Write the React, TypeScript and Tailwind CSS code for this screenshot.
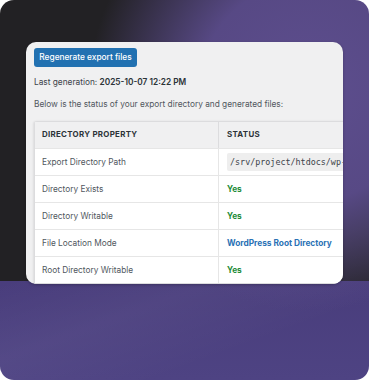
import React from 'react';

const rows: { label: string; value: React.ReactNode }[] = [
  {
    label: 'Export Directory Path',
    value: (
      <code className="rounded-[2px] bg-[#eeeeee] px-[3px] py-[3px] font-['DejaVu_Sans_Mono',monospace] text-[8.4px] text-[#3c434a] whitespace-nowrap">
        /srv/project/htdocs/wp-content/uploads/exports
      </code>
    ),
  },
  { label: 'Directory Exists', value: <span className="font-bold text-[#1e8c37]">Yes</span> },
  { label: 'Directory Writable', value: <span className="font-bold text-[#1e8c37]">Yes</span> },
  { label: 'File Location Mode', value: <span className="font-bold text-[#2a72b5]">WordPress Root Directory</span> },
  { label: 'Root Directory Writable', value: <span className="font-bold text-[#1e8c37]">Yes</span> },
];

export default function App() {
  return (
    <div
      className="h-[380px] w-[369px] overflow-hidden rounded-[14px] bg-[radial-gradient(ellipse_60%_58%_at_84%_24%,#5d4e8e_0%,rgba(90,75,138,0.95)_50%,rgba(34,33,36,0)_100%),linear-gradient(160deg,rgba(255,255,255,0)_55%,rgba(255,255,255,0.04)_70%,rgba(255,255,255,0)_85%),linear-gradient(180deg,#222124_0%,#222124_74%,#493d7c_74%,#4e4383_100%)] pl-[26px] pt-[42px] font-['Inter',sans-serif]"
    >
      <div className="flex h-[242px] w-[317px] flex-col overflow-hidden rounded-[10px] bg-[#f0f0f1] pl-[8px] pt-[6px] shadow-[0_1px_3px_rgba(0,0,0,0.25)]">
        <div className="flex">
          <button className="h-[19px] w-[103px] rounded-[3px] bg-[#2271b1] text-[8.3px] font-medium leading-none text-white">
            Regenerate export files
          </button>
        </div>
        <p className="mt-[8px] text-[8.3px] leading-[14px] text-[#3c434a]">
          Last generation: <span className="font-semibold text-[#2c3338]">2025-10-07 12:22 PM</span>
        </p>
        <p className="mt-[8px] text-[8.3px] leading-[14px] text-[#50575e]">
          Below is the status of your export directory and generated files:
        </p>
        <div className="mt-[10px] w-[420px] shrink-0 rounded-tl-[3px] border border-[#dcdcde] bg-white shadow-[-1px_0_2px_rgba(0,0,0,0.08)]">
          <div className="grid h-[26px] grid-cols-[184px_1fr] bg-[#f0f0f1] text-[7.9px] font-bold tracking-[0.3px] text-[#2c3338]">
            <div className="flex items-center border-r border-[#dcdcde] pl-[7px]">DIRECTORY PROPERTY</div>
            <div className="flex items-center pl-[8px]">STATUS</div>
          </div>
          {rows.map((r) => (
            <div key={r.label} className="grid h-[27px] grid-cols-[184px_1fr] border-t border-[#e6e6e6] text-[8.3px]">
              <div className="flex items-center border-r border-[#e6e6e6] pl-[7px] text-[#50575e]">{r.label}</div>
              <div className="flex items-center pl-[8px]">{r.value}</div>
            </div>
          ))}
        </div>
      </div>
    </div>
  );
}
